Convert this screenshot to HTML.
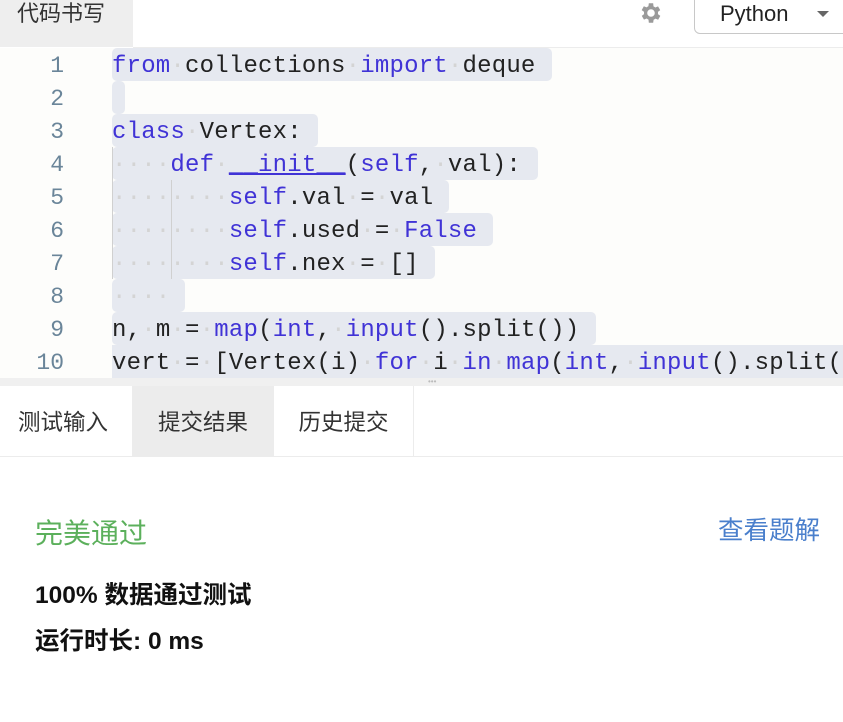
<!DOCTYPE html>
<html><head><meta charset="utf-8"><style>
*{margin:0;padding:0;box-sizing:border-box}
body{width:843px;height:722px;background:#fff;font-family:"Liberation Sans","Noto Sans CJK SC",sans-serif;position:relative;overflow:hidden}
.tabtop{position:absolute;left:0;top:0;width:133px;height:47px;background:#eeeeee;font-size:22px;color:#333;padding:1px 0 0 17px;line-height:26px}
.topline{position:absolute;left:133px;top:47px;right:0;height:1px;background:#ececec}
.gear{position:absolute;left:638px;top:0}
.sel{position:absolute;left:694px;top:-8px;width:160px;height:42px;border:1px solid #c8c8c8;border-radius:6px;font-size:22px;color:#222;padding:8px 0 0 25px}
.sel .arr{position:absolute;left:122px;top:18px;width:0;height:0;border-left:6px solid transparent;border-right:6px solid transparent;border-top:6px solid #666}
.editor{position:absolute;left:0;top:48px;width:843px;height:330px;background:#fdfdfb;overflow:hidden}
.ln{position:absolute;left:0;width:64px;text-align:right;font-family:"Liberation Mono",monospace;font-size:23px;color:#6a8599;height:33px;line-height:36px}
.cl{position:absolute;left:112px;height:33px;line-height:37px;font-family:"Liberation Mono",monospace;font-size:24px;letter-spacing:0.2px;color:#222;white-space:pre}
.bg{position:absolute;background:#e6e9f0;height:33px;border-radius:5px}
.k{color:#4033d6}
.d{color:#d4d4d4}
.guide{position:absolute;width:1px;background:#d0d0d0}
.split{position:absolute;left:0;top:378px;width:843px;height:8px;background:#f0f0f0}
.tabs{position:absolute;left:0;top:386px;width:843px;height:71px;border-bottom:1px solid #ececec}
.tab{position:absolute;top:0;height:70px;line-height:74px;font-size:22.5px;color:#333;text-align:center}
</style></head><body>
<div class="tabtop">代码书写</div>
<div class="topline"></div>
<svg class="gear" width="26" height="26" viewBox="0 0 24 24"><path fill="#9a9a9a" d="M19.4 13a7.5 7.5 0 0 0 0-2l2.1-1.6-2-3.5-2.5 1a7.6 7.6 0 0 0-1.7-1L15 3h-4l-.4 2.8a7.6 7.6 0 0 0-1.7 1l-2.5-1-2 3.5L6.6 11a7.5 7.5 0 0 0 0 2l-2.1 1.6 2 3.5 2.5-1a7.6 7.6 0 0 0 1.7 1L11 21h4l.4-2.8a7.6 7.6 0 0 0 1.7-1l2.5 1 2-3.5zM13 15.5a3.5 3.5 0 1 1 0-7 3.5 3.5 0 0 1 0 7z" transform="translate(-1 0)"/></svg>
<div class="sel">Python<span class="arr"></span></div>

<div class="editor">
<div class="bg" style="left:112px;top:0;width:440px"></div>
<div class="bg" style="left:112px;top:33px;width:13px"></div>
<div class="bg" style="left:112px;top:66px;width:206px"></div>
<div class="bg" style="left:112px;top:99px;width:426px"></div>
<div class="bg" style="left:112px;top:132px;width:337px"></div>
<div class="bg" style="left:112px;top:165px;width:381px"></div>
<div class="bg" style="left:112px;top:198px;width:323px"></div>
<div class="bg" style="left:112px;top:231px;width:73px"></div>
<div class="bg" style="left:112px;top:264px;width:484px"></div>
<div class="bg" style="left:112px;top:297px;width:731px;border-radius:0"></div>
<div class="guide" style="left:112px;top:99px;height:132px"></div>
<div class="guide" style="left:171px;top:132px;height:99px"></div>

<div class="ln" style="top:0">1</div>
<div class="ln" style="top:33px">2</div>
<div class="ln" style="top:66px">3</div>
<div class="ln" style="top:99px">4</div>
<div class="ln" style="top:132px">5</div>
<div class="ln" style="top:165px">6</div>
<div class="ln" style="top:198px">7</div>
<div class="ln" style="top:231px">8</div>
<div class="ln" style="top:264px">9</div>
<div class="ln" style="top:297px">10</div>

<div class="cl" style="top:0"><span class="k">from</span><span class="d">·</span>collections<span class="d">·</span><span class="k">import</span><span class="d">·</span>deque</div>
<div class="cl" style="top:66px"><span class="k">class</span><span class="d">·</span>Vertex:</div>
<div class="cl" style="top:99px"><span class="d">····</span><span class="k">def</span><span class="d">·</span><span class="k"><u>__init__</u></span>(<span class="k">self</span>,<span class="d">·</span>val):</div>
<div class="cl" style="top:132px"><span class="d">········</span><span class="k">self</span>.val<span class="d">·</span>=<span class="d">·</span>val</div>
<div class="cl" style="top:165px"><span class="d">········</span><span class="k">self</span>.used<span class="d">·</span>=<span class="d">·</span><span class="k">False</span></div>
<div class="cl" style="top:198px"><span class="d">········</span><span class="k">self</span>.nex<span class="d">·</span>=<span class="d">·</span>[]</div>
<div class="cl" style="top:231px"><span class="d">····</span></div>
<div class="cl" style="top:264px">n,<span class="d">·</span>m<span class="d">·</span>=<span class="d">·</span><span class="k">map</span>(<span class="k">int</span>,<span class="d">·</span><span class="k">input</span>().split())</div>
<div class="cl" style="top:297px">vert<span class="d">·</span>=<span class="d">·</span>[Vertex(i)<span class="d">·</span><span class="k">for</span><span class="d">·</span>i<span class="d">·</span><span class="k">in</span><span class="d">·</span><span class="k">map</span>(<span class="k">int</span>,<span class="d">·</span><span class="k">input</span>().split())]</div>
</div>

<div class="split"><div style="position:absolute;left:428px;top:1px;font-size:8px;color:#bbb;line-height:6px">•••</div></div>
<div class="tabs">
<div class="tab" style="left:0;width:126px">测试输入</div>
<div class="tab" style="left:132px;width:142px;background:#ececec">提交结果</div>
<div class="tab" style="left:274px;width:140px;border-right:1px solid #ececec">历史提交</div>
</div>

<div style="position:absolute;left:35px;top:516px;font-size:28px;color:#5cb05c;line-height:36px">完美通过</div>
<div style="position:absolute;left:718px;top:515px;font-size:25.5px;color:#4a7fcc;line-height:32px">查看题解</div>
<div style="position:absolute;left:35px;top:580px;font-size:24.5px;font-weight:bold;color:#111;line-height:32px">100% 数据通过测试</div>
<div style="position:absolute;left:35px;top:626px;font-size:24.5px;font-weight:bold;color:#111;line-height:32px">运行时长: 0 ms</div>
</body></html>
